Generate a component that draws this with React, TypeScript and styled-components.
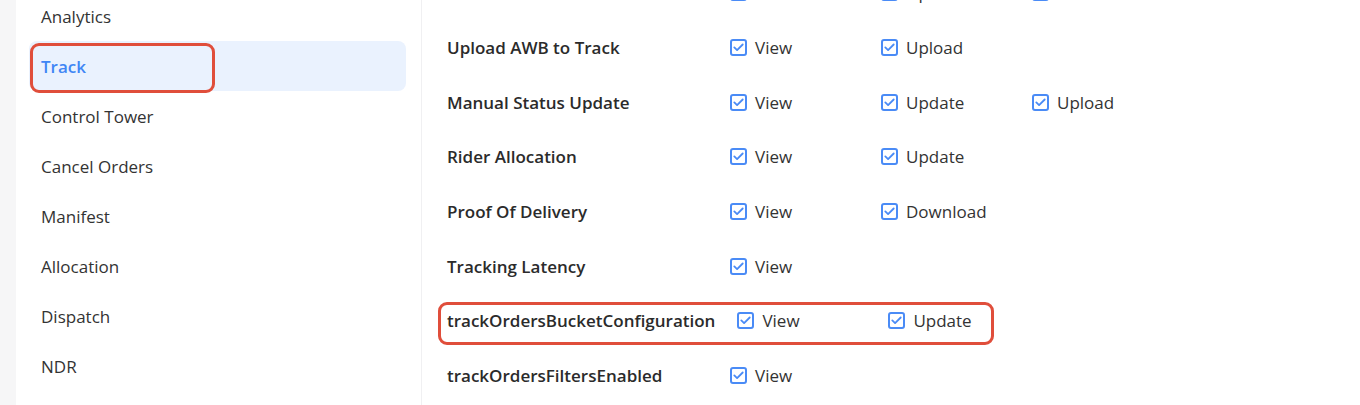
import React from "react";
import styled, { createGlobalStyle } from "styled-components";

const Global = createGlobalStyle`
  html, body { margin: 0; padding: 0; background: #ffffff; }
  body { font-family: "Open Sans", "Noto Sans", sans-serif; color: #333333; }
  * { box-sizing: border-box; }
`;

const Page = styled.div`
  display: flex;
  width: 1360px;
  height: 405px;
  overflow: hidden;
  background: #f6f6f7;
  padding-left: 16px;
`;

const Sidebar = styled.nav`
  width: 406px;
  flex-shrink: 0;
  background: #ffffff;
  border-right: 1px solid #f0f0f2;
  padding: 0 15px 0 13px;
  overflow: hidden;
`;

const NavList = styled.ul`
  list-style: none;
  margin: -9px 0 0;
  padding: 0;
  display: flex;
  flex-direction: column;
`;

const NavItem = styled.li<{ $active?: boolean }>`
  position: relative;
  height: 50px;
  display: flex;
  align-items: center;
  padding-left: 12px;
  border-radius: 8px;
  font-size: 17px;
  color: ${(p) => (p.$active ? "#3f86f5" : "#333333")};
  background: ${(p) => (p.$active ? "#eaf2fe" : "transparent")};
  font-weight: ${(p) => (p.$active ? 600 : 400)};
`;

const Annotation = styled.div<{ $left: number; $top: number; $w: number; $h: number }>`
  position: absolute;
  left: ${(p) => p.$left}px;
  top: ${(p) => p.$top}px;
  width: ${(p) => p.$w}px;
  height: ${(p) => p.$h}px;
  border: 3px solid #e04e3b;
  border-radius: 9px;
  pointer-events: none;
`;

const Main = styled.main`
  flex: 1;
  background: #ffffff;
  padding-left: 25px;
  overflow: hidden;
`;

const Rows = styled.div`
  display: flex;
  flex-direction: column;
  margin-top: -34.5px;
`;

const Row = styled.div`
  position: relative;
  height: 54.67px;
  display: flex;
  align-items: center;
`;

const Label = styled.div`
  min-width: 261px;
  margin-right: 22px;
  font-size: 17px;
  font-weight: 600;
  color: #2b2b2b;
  white-space: nowrap;
`;

const Option = styled.label`
  width: 151px;
  display: flex;
  align-items: center;
  gap: 8px;
  font-size: 17px;
  color: #333333;
`;

const Box = styled.span`
  width: 17px;
  height: 17px;
  border: 2px solid #4a8bf6;
  border-radius: 3px;
  background: #ffffff;
  display: inline-flex;
  align-items: center;
  justify-content: center;
  flex-shrink: 0;
`;

const Check = () => (
  <Box>
    <svg width="11" height="9" viewBox="0 0 11 9" fill="none">
      <path d="M1.3 4.4 L4.1 7.1 L9.7 1.5" stroke="#4a8bf6" strokeWidth="1.8" strokeLinecap="round" strokeLinejoin="round" />
    </svg>
  </Box>
);

const navItems = [
  "Analytics",
  "Track",
  "Control Tower",
  "Cancel Orders",
  "Manifest",
  "Allocation",
  "Dispatch",
  "NDR",
];

const rows: { label: string; opts: string[]; mark?: boolean }[] = [
  { label: "Track Orders", opts: ["View", "Update", "Download"] },
  { label: "Upload AWB to Track", opts: ["View", "Upload"] },
  { label: "Manual Status Update", opts: ["View", "Update", "Upload"] },
  { label: "Rider Allocation", opts: ["View", "Update"] },
  { label: "Proof Of Delivery", opts: ["View", "Download"] },
  { label: "Tracking Latency", opts: ["View"] },
  { label: "trackOrdersBucketConfiguration", opts: ["View", "Update"], mark: true },
  { label: "trackOrdersFiltersEnabled", opts: ["View"] },
];

export default function App() {
  return (
    <>
      <Global />
      <Page>
        <Sidebar>
          <NavList>
            {navItems.map((n) => (
              <NavItem key={n} $active={n === "Track"}>
                {n}
                {n === "Track" && <Annotation $left={1} $top={2} $w={185} $h={50} />}
              </NavItem>
            ))}
          </NavList>
        </Sidebar>
        <Main>
          <Rows>
            {rows.map((r) => (
              <Row key={r.label}>
                <Label>{r.label}</Label>
                {r.opts.map((o) => (
                  <Option key={o}>
                    <Check />
                    {o}
                  </Option>
                ))}
                {r.mark && <Annotation $left={-9} $top={9} $w={556} $h={43} />}
              </Row>
            ))}
          </Rows>
        </Main>
      </Page>
    </>
  );
}
